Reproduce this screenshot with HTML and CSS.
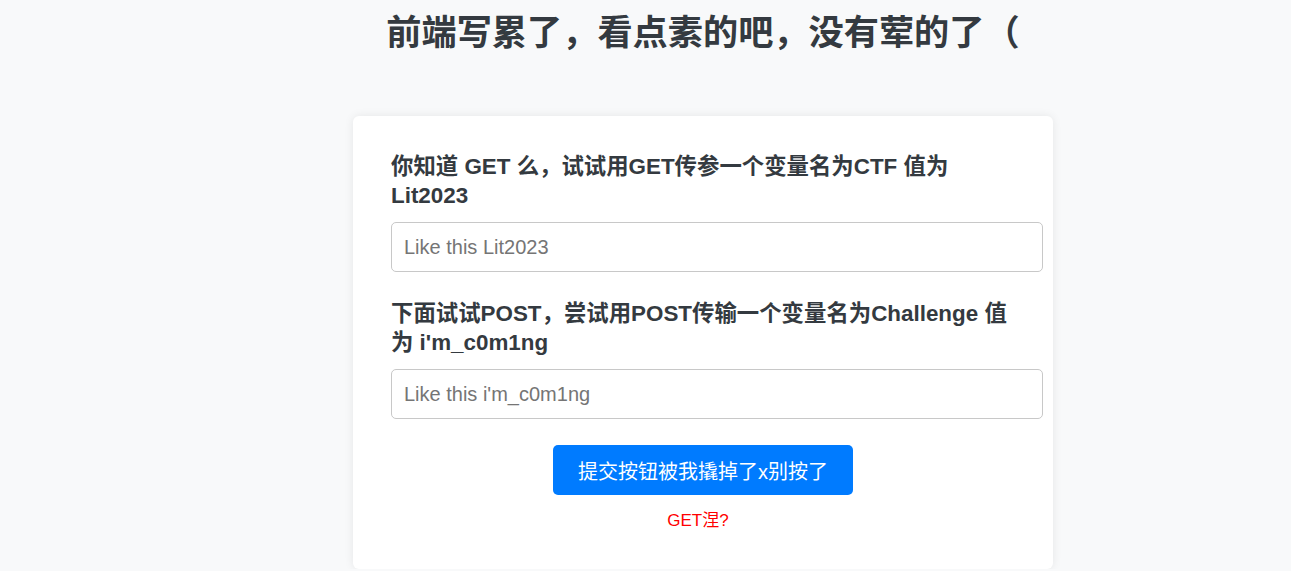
FILE: index.html
```html
<!DOCTYPE html>
<html lang="zh-CN">
<head>
<meta charset="utf-8">
<title>Lit2023</title>
<link rel="stylesheet" href="styles.css">
</head>
<body>
<div class="wrap">
  <h1 class="title">前端写累了，看点素的吧，没有荤的了（</h1>
  <form class="card">
    <div class="group">
      <label class="label" for="ctf">你知道 GET 么，试试用GET传参一个变量名为CTF 值为 Lit2023</label>
      <input class="field" id="ctf" type="text" placeholder="Like this Lit2023">
    </div>
    <div class="group group-last">
      <label class="label" for="ch">下面试试POST，尝试用POST传输一个变量名为Challenge 值为 i'm_c0m1ng</label>
      <input class="field" id="ch" type="text" placeholder="Like this i'm_c0m1ng">
    </div>
    <div class="actions">
      <button class="btn" type="button">提交按钮被我撬掉了x别按了</button>
    </div>
    <p class="hint">GET涅?</p>
  </form>
</div>
</body>
</html>
```
FILE: styles.css
```css
* { box-sizing: border-box; }
html, body {
  margin: 0;
  padding: 0;
  background: #f8f9fa;
  font-family: "Liberation Sans", "Noto Sans CJK SC", sans-serif;
  color: #343a40;
}
.wrap {
  width: 700px;
  margin-left: 353px;
}
.title {
  margin: 12px 0 62px;
  font-size: 35.2px;
  line-height: 42px;
  font-weight: 700;
  text-align: center;
  color: #343a40;
}
.card {
  background: #fff;
  border-radius: 6px;
  box-shadow: 0 0 10px rgba(0, 0, 0, 0.08);
  padding: 36px 38px 37px;
}
.group {
  margin-bottom: 27px;
}
.group-last {
  margin-bottom: 26px;
}
.label {
  display: block;
  font-size: 22.4px;
  line-height: 29px;
  font-weight: 700;
  margin-bottom: 12px;
  color: #343a40;
}
.field {
  display: block;
  width: 652px;
  height: 50px;
  padding: 0 12px;
  border: 1px solid #c8c8c8;
  border-radius: 5px;
  font-family: "Liberation Sans", "Noto Sans CJK SC", sans-serif;
  font-size: 20px;
  color: #333;
  background: #fff;
  outline: none;
}
.field::placeholder {
  color: #757575;
}
.actions {
  display: flex;
  justify-content: center;
}
.btn {
  height: 50px;
  width: 300px;
  padding: 0 25px;
  border: 0;
  border-radius: 5px;
  background: #007bff;
  color: #fff;
  font-family: "Liberation Sans", "Noto Sans CJK SC", sans-serif;
  font-size: 20px;
  cursor: pointer;
}
.hint {
  margin: 15px 0 0;
  padding-right: 10px;
  text-align: center;
  color: #ff0000;
  font-size: 17px;
  line-height: 22px;
}
```
